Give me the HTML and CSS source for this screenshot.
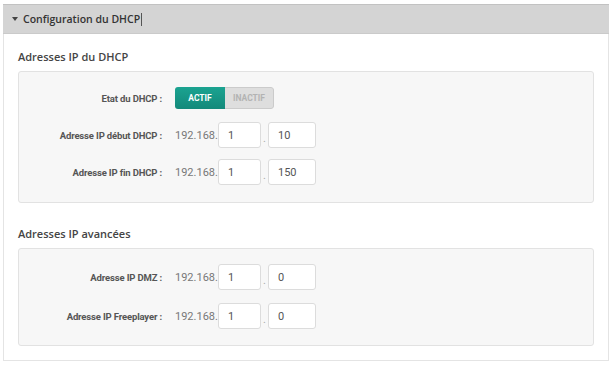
FILE: index.html
```html
<!DOCTYPE html>
<html>
	<head>
		<meta charset="UTF-8">
		<title>Configuration du DHCP</title>
		<link rel="stylesheet" href="styles.css">
	</head>
	<body>
		<div class="panel">
			<div class="panel-head">
				<span class="arrow"></span>
				<span class="head-title">Configuration du DHCP</span><span class="caret"></span>
			</div>
			<div class="panel-body">
				<h3 class="section-title">Adresses IP du DHCP</h3>
				<div class="box box-dhcp">
					<div class="row">
						<label class="row-label">Etat du DHCP :</label>
						<div class="toggle">
							<span class="toggle-on">ACTIF</span>
							<span class="toggle-off">INACTIF</span>
						</div>
					</div>
					<div class="row">
						<label class="row-label">Adresse IP début DHCP :</label>
						<span class="prefix">192.168.</span>
						<input class="ip ip-a" type="text" value="1">
						<span class="dot">.</span>
						<input class="ip ip-b" type="text" value="10">
					</div>
					<div class="row">
						<label class="row-label">Adresse IP fin DHCP :</label>
						<span class="prefix">192.168.</span>
						<input class="ip ip-a" type="text" value="1">
						<span class="dot">.</span>
						<input class="ip ip-b" type="text" value="150">
					</div>
				</div>

				<h3 class="section-title second">Adresses IP avancées</h3>
				<div class="box box-adv">
					<div class="row">
						<label class="row-label">Adresse IP DMZ :</label>
						<span class="prefix">192.168.</span>
						<input class="ip ip-a" type="text" value="1">
						<span class="dot">.</span>
						<input class="ip ip-b" type="text" value="0">
					</div>
					<div class="row">
						<label class="row-label">Adresse IP Freeplayer :</label>
						<span class="prefix">192.168.</span>
						<input class="ip ip-a" type="text" value="1">
						<span class="dot">.</span>
						<input class="ip ip-b" type="text" value="0">
					</div>
				</div>
			</div>
		</div>
	</body>
</html>
```
FILE: styles.css
```css
* {
	padding: 0;
	margin: 0;
	box-sizing: border-box;
}
body {
	background: #fff;
	font-family: Roboto, "Liberation Sans", sans-serif;
	color: #444;
	padding: 4px 4px 0 3px;
}
.panel {
	border: 1px solid #e4e4e4;
	border-top: none;
	height: 357px;
}
.panel-head {
	display: flex;
	align-items: center;
	height: 30px;
	background: #d4d4d4;
	border-top: 1px solid #c2c2c2;
	border-bottom: 1px solid #cacaca;
	margin: 0 -1px;
	padding-left: 9px;
}
.arrow {
	width: 0;
	height: 0;
	border-left: 3px solid transparent;
	border-right: 3px solid transparent;
	border-top: 4px solid #444;
	margin-right: 5px;
}
.head-title {
	font-family: "Open Sans", sans-serif;
	font-size: 10.5px;
	font-weight: 600;
	color: #333;
}
.caret {
	width: 1px;
	height: 13px;
	background: #555;
	margin-left: 1px;
}
.panel-body {
	padding: 14px 14px 0 14px;
}
.section-title {
	font-family: "Open Sans", sans-serif;
	font-size: 11px;
	font-weight: 600;
	color: #444;
	line-height: 17px;
	margin-bottom: 6px;
}
.section-title.second {
	margin-top: 22px;
	margin-bottom: 6px;
}
.box {
	background: #f7f7f7;
	border: 1px solid #e2e2e2;
	border-radius: 3px;
	display: flex;
	flex-direction: column;
}
.box-dhcp {
	padding: 13px 0 17px;
	gap: 11px;
}
.box-adv {
	padding: 15px 0 16px;
	gap: 13px;
}
.row {
	display: flex;
	align-items: center;
	height: 26px;
}
.row-label {
	width: 143px;
	text-align: right;
	font-size: 9.5px;
	letter-spacing: -0.15px;
	font-weight: bold;
	color: #555;
	margin-right: 13px;
}
.prefix {
	font-size: 11px;
	color: #777;
	width: 43px;
}
.ip {
	height: 26px;
	border: 1px solid #dcdcdc;
	border-radius: 3px;
	background: #fff;
	font-family: Roboto, "Liberation Sans", sans-serif;
	font-size: 11px;
	color: #555;
	padding-left: 9px;
	outline: none;
}
.ip-a {
	width: 43px;
}
.ip-b {
	width: 48px;
}
.dot {
	width: 7px;
	text-align: center;
	font-size: 11px;
	color: #aaa;
	padding-top: 6px;
}
.toggle {
	display: flex;
	height: 22px;
	border-radius: 3px;
	overflow: hidden;
	font-size: 8.5px;
	font-weight: bold;
}
.toggle-on {
	width: 50px;
	display: flex;
	align-items: center;
	justify-content: center;
	background: linear-gradient(#1ba391, #13897a);
	color: #fff;
}
.toggle-off {
	width: 49px;
	display: flex;
	align-items: center;
	justify-content: center;
	background: #dedede;
	border: 1px solid #cbcbcb;
	border-left: none;
	border-radius: 0 3px 3px 0;
	color: #b3b3b3;
}
```
